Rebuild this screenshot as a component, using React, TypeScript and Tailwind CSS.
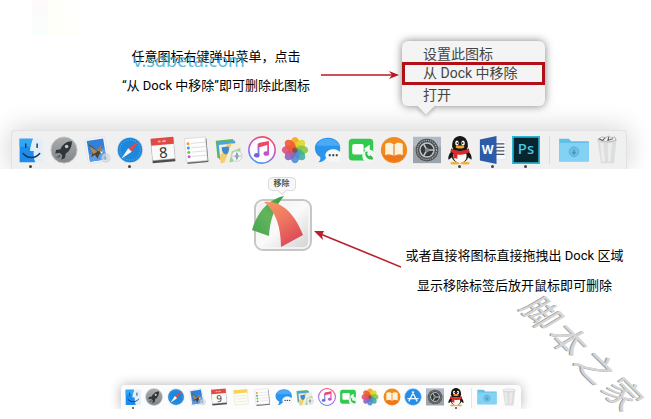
import type { ReactNode } from "react";

const SANS = "font-[Roboto,'Noto_Sans_CJK_SC',sans-serif]";

function Svg({ children }: { children: ReactNode }) {
  return (
    <svg viewBox="0 0 32 32" className="block w-full overflow-visible" aria-hidden="true">
      {children}
    </svg>
  );
}

const Finder = () => (
  <Svg>
    <path d="M3 3h27v27H3z" fill="#e4eef8" />
    <path d="M3 3h15c-2 5-3 9-3 14h4c0 5 0 9 2 13H3z" fill="#1e8cec" />
    <path d="M3 3h15c-1 3-2 5-2 9H3z" fill="#2fa8f3" />
    <path d="M10 9v4M23 9v4M7 20c5 6 14 6 19 0" stroke="#173654" strokeWidth="1.6" fill="none" strokeLinecap="round" />
  </Svg>
);

const Rocket = () => (
  <Svg>
    <defs>
      <linearGradient id="steel" x1="0" y1="0" x2="0" y2="1">
        <stop offset="0" stopColor="#a9adb0" />
        <stop offset="1" stopColor="#7f8588" />
      </linearGradient>
    </defs>
    <circle cx="16" cy="16" r="15" fill="url(#steel)" stroke="#c9cccd" />
    <path d="M25 6c-6 0-11 4-13 9l-5 1-1 4 5-1 3 3-1 5 4-2 1-5c5-3 7-8 7-14z" fill="#303538" />
    <circle cx="19" cy="12" r="2" fill="#c3c8ca" />
    <path d="M11 21l-4 4 5-1z" fill="#53595c" />
  </Svg>
);

const Mail = () => (
  <Svg>
    <g transform="rotate(-9 16 16)">
      <path d="M4 2h23v28H4z" fill="#f5f8fb" stroke="#d5dbe1" strokeWidth=".6" />
      <path d="M6 4h19v24H6z" fill="#3480d8" />
      <path d="M6 20l19-5v13H6z" fill="#5c9be0" />
      <path d="M7 8c3 2 6 5 8 8l5 1 3 3-5 1-3 5-2-5-5 2 3-6z" fill="#4c4137" />
      <path d="M8 10c3 2 6 5 8 8l-5 2z" fill="#a98a5c" />
      <path d="M15 17l7-6-2 7z" fill="#9c8058" />
      <path d="M19 18l4 1-3 2z" fill="#fff" />
    </g>
    <circle cx="26" cy="25" r="5.500" fill="#bfc8d0" opacity=".6" />
    <circle cx="26" cy="25" r="3.500" fill="none" stroke="#e8edf1" strokeWidth=".8" />
  </Svg>
);

const Safari = () => (
  <Svg>
    <circle cx="16" cy="16" r="15" fill="#d4dbe1" />
    <circle cx="16" cy="16" r="14" fill="#1d87dc" />
    <circle cx="16" cy="16" r="11.500" fill="none" stroke="#7dc1f2" strokeWidth="1" strokeDasharray="1 2" />
    <path d="M26 6L14 14l4 4z" fill="#ea4540" />
    <path d="M6 26l8-12 4 4z" fill="#f6f6f6" />
  </Svg>
);

const Calendar = ({ day }: { day: string }) => (
  <Svg>
    <g transform="rotate(-5 16 16)">
      <path d="M3 4h26v26H3z" fill="#4c4c4c" />
      <path d="M3 3h26v24H3z" fill="#fafafa" stroke="#c4c4c4" strokeWidth=".6" />
      <path d="M3 2h26v8H3z" fill="#e04a45" />
      <path d="M11 6h3M16 6h4" stroke="#f6b3af" strokeWidth="2" />
      <text x="16" y="25" textAnchor="middle" fontSize="17" fill="#333" fontFamily="Noto Sans, sans-serif">{day}</text>
    </g>
  </Svg>
);

const Notes = () => (
  <Svg>
    <g transform="rotate(-5 16 16)">
      <path d="M4 4h24v25H4z" fill="#fffdf5" stroke="#d5d3cb" strokeWidth=".7" />
      <path d="M4 3h24v6H4z" fill="#f6d257" />
      <path d="M6 14h20M6 19h20M6 24h20" stroke="#e4e1d6" />
    </g>
  </Svg>
);

const Reminders = () => (
  <Svg>
    <g transform="rotate(-5 16 16)">
      <path d="M5 4h24v27H5z" fill="#686868" />
      <path d="M4 2h24v27H4z" fill="#fdfdfd" stroke="#d0d0d0" strokeWidth=".7" />
      <path d="M11 8h16M11 13h16M11 18h16M11 23h16" stroke="#d9dcdf" />
      <circle cx="7.500" cy="8" r="1.700" fill="#f59a23" />
      <circle cx="7.500" cy="13" r="1.700" fill="#2b9fec" />
      <circle cx="7.500" cy="18" r="1.700" fill="#6cc832" />
      <circle cx="7.500" cy="23" r="1.700" fill="#c657dc" />
    </g>
  </Svg>
);

const Maps = () => (
  <Svg>
    <g transform="rotate(-6 16 16)">
      <path d="M2 4h20v20H2z" fill="#58b85a" />
      <path d="M4 6h20v20H4z" fill="#4ca2e7" />
      <path d="M5 9h24v21H5z" fill="#f2eddf" />
      <path d="M5 22l10-13h5L9 30H5z" fill="#f1cf6e" />
      <path d="M15 30l4-12 10-3v4l-7 3-3 8z" fill="#9bd493" />
      <path d="M8 12h8v4q-1 4-4 5-3-1-4-5z" fill="#3989d3" />
    </g>
    <circle cx="25" cy="23" r="6" fill="#f4f5f6" stroke="#c9ced2" />
    <path d="M25 18l2 5-2 5-2-5z" fill="#8199ad" />
    <path d="M20 23h10" stroke="#a8b3bc" />
  </Svg>
);

const Music = () => (
  <Svg>
    <defs>
      <linearGradient id="tune" x1=".7" y1="0" x2=".3" y2="1">
        <stop offset="0" stopColor="#fa4b63" />
        <stop offset=".55" stopColor="#b557dc" />
        <stop offset="1" stopColor="#3d9eee" />
      </linearGradient>
    </defs>
    <circle cx="16" cy="16" r="15" fill="#fcfbfd" stroke="url(#tune)" strokeWidth="1.800" />
    <path d="M12 22V10l11-3v12" fill="none" stroke="url(#tune)" strokeWidth="2" />
    <path d="M12 8l11-2v4l-11 3z" fill="#ee4664" />
    <ellipse cx="10" cy="22" rx="3.200" ry="2.600" fill="#795cdf" />
    <ellipse cx="21" cy="20" rx="3.200" ry="2.600" fill="#c452ca" />
  </Svg>
);

const petals = ["#f7a51c", "#dfd72b", "#86c440", "#3fae9a", "#4b8dd6", "#8b65bd", "#db4f7e", "#ee5a30"];

const Photos = () => (
  <Svg>
    <circle cx="16" cy="16" r="14" fill="#fff" opacity=".6" />
    {petals.map((fill, i) => (
      <ellipse key={fill} cx="16" cy="8.500" rx="5.200" ry="7.500" fill={fill} opacity=".9" transform={`rotate(${i * 45} 16 16)`} />
    ))}
    <circle cx="16" cy="16" r="3" fill="#6b4a3a" opacity=".7" />
  </Svg>
);

const Messages = () => (
  <Svg>
    <path d="M16 2c8 0 14 5 14 12s-6 12-14 12l-3 0c-2 3-5 4-8 4 2-2 3-4 2-6C3 22 1 18 1 14 1 7 8 2 16 2z" fill="#2b94ec" />
    <path d="M3 11C5 5 10 3 16 3s11 3 13 8z" fill="#58b4f7" opacity=".7" />
    <path d="M22 15c5 0 9 3 9 7 0 2-1 4-2 5l1 3-4-1c-8 2-13-2-13-7 0-4 4-7 9-7z" fill="#f6f7f8" />
    <circle cx="18" cy="22" r="1.300" fill="#3d4b57" />
    <circle cx="22" cy="22" r="1.300" fill="#3d4b57" />
    <circle cx="26" cy="22" r="1.300" fill="#3d4b57" />
  </Svg>
);

const FaceTime = () => (
  <Svg>
    <rect x="2" y="3" width="28" height="25" rx="4" fill="#31ca4e" />
    <rect x="6" y="9" width="13" height="12" rx="2" fill="#fff" />
    <path d="M20 14l6-4v10l-6-4z" fill="#fff" />
    <circle cx="25" cy="23" r="7.500" fill="#eef6f0" />
    <path d="M21 18c-1 6 3 9 8 9l1-2-3-3-2 1c-1-1-2-2-2-3l1-2z" fill="#31bd4c" />
  </Svg>
);

const Books = () => (
  <Svg>
    <circle cx="16" cy="16" r="15" fill="#f28b1d" />
    <path d="M3 22a15 15 0 0026 0z" fill="#e96c1a" opacity=".6" />
    <path d="M16 10c-3-3-7-3-10-1v13c3-2 7-1 10 1 3-2 7-3 10-1V9c-3-2-7-2-10 1z" fill="#fff2dd" />
    <path d="M16 10v13" stroke="#dd7b20" strokeWidth="1.300" />
  </Svg>
);

const AppStore = () => (
  <Svg>
    <circle cx="16" cy="16" r="15" fill="#238de9" stroke="#c2dcf1" />
    <path d="M17 7L9 23M15 7l8 16M7 19h18" stroke="#f4faff" strokeWidth="2.400" fill="none" strokeLinecap="round" />
  </Svg>
);

const Settings = () => (
  <Svg>
    <path d="M0 1h32v30H0z" fill="#9ca4ab" />
    <path d="M0 1h32v11H0z" fill="#b9c5d0" opacity=".7" />
    <circle cx="16" cy="16" r="13" fill="#4b4e50" />
    <circle cx="16" cy="16" r="11" fill="none" stroke="#a5a8aa" strokeWidth="1.500" strokeDasharray="1.500 1" />
    <circle cx="16" cy="16" r="8" fill="#34383a" stroke="#c3c5c6" strokeWidth="1.600" />
    <path d="M17 16h7M16 16l-4-7M16 16l-4 7" stroke="#c3c5c6" strokeWidth="1.800" />
    <circle cx="16" cy="16" r="2.500" fill="#858a8d" />
  </Svg>
);

const Penguin = () => (
  <Svg>
    <path d="M8 16C3 20 2 25 3 27l4-3zM24 16c5 4 6 9 5 11l-4-3z" fill="#171717" />
    <ellipse cx="16" cy="21" rx="10" ry="10" fill="#1a1a1a" />
    <ellipse cx="16" cy="23" rx="7.500" ry="8" fill="#fafafa" />
    <path d="M7 11c0-7 4-11 9-11s9 4 9 11c0 4-3 6-9 6s-9-2-9-6z" fill="#161616" />
    <ellipse cx="12.500" cy="8" rx="2" ry="3" fill="#fff" />
    <ellipse cx="19.500" cy="8" rx="2" ry="3" fill="#fff" />
    <circle cx="13" cy="8" r="1" fill="#111" />
    <circle cx="19" cy="8" r="1" fill="#111" />
    <ellipse cx="16" cy="12.500" rx="5" ry="1.700" fill="#f4a921" />
    <path d="M6 14c6 4 14 4 20 0l1 4c-4 3-9 4-14 3v5l-4-1v-5l-4-2z" fill="#db2929" />
    <ellipse cx="10" cy="31" rx="5" ry="1.500" fill="#efb13a" />
    <ellipse cx="22" cy="31" rx="5" ry="1.500" fill="#efb13a" />
  </Svg>
);

const Word = () => (
  <Svg>
    <path d="M16 5h15v22H16z" fill="#f7f8fa" stroke="#d9dce2" strokeWidth=".6" />
    <path d="M19 9h10M19 13h10M19 17h10M19 21h10" stroke="#4b5260" strokeWidth="1.500" />
    <path d="M1 4l19-4v32L1 28z" fill="#2c5ba9" />
    <text x="10" y="21" textAnchor="middle" fontSize="14" fontWeight="700" fill="#fff" fontFamily="Noto Sans, sans-serif">W</text>
  </Svg>
);

const Photoshop = () => (
  <Svg>
    <path d="M0 0h32v32H0z" fill="#29b7d2" />
    <path d="M2 2h28v28H2z" fill="#07252e" />
    <text x="16" y="21" textAnchor="middle" fontSize="17" fontWeight="500" fill="#43cce9" fontFamily="Noto Sans, sans-serif">Ps</text>
  </Svg>
);

const Folder = () => (
  <Svg>
    <path d="M-1 3h11l3 3h20v23H-1z" fill="#62bfe8" />
    <path d="M-1 8h34v21H-1z" fill="#83d2f4" />
    <circle cx="16" cy="18" r="5.500" fill="#6dbfe4" stroke="#56add5" />
    <path d="M16 15v5m-2-2l2 3 2-3" stroke="#4294bd" strokeWidth="1.200" fill="none" />
  </Svg>
);

const Trash = ({ full }: { full?: boolean }) => (
  <Svg>
    <path d="M5 4h22l-3 27H9z" fill="#dcdddd" />
    <path d="M8 8h4l2 21h-4zM17 8h5l-2 21h-3z" fill="#eaebeb" />
    <ellipse cx="16" cy="4" rx="11" ry="2.500" fill="#f1f1f1" stroke="#c7c8c8" strokeWidth=".8" />
    {full && (
      <>
        <path d="M6 4l4-3 4 1 4-2 3 2 4-1 1 4-9 2z" fill="#f4f4f4" stroke="#999" strokeWidth=".7" />
        <path d="M7 3l4 2 3-3M18 1l-1 4 6-2" fill="none" stroke="#555" strokeWidth="1.200" />
      </>
    )}
  </Svg>
);

type Item = { name: string; icon: ReactNode; open?: boolean };

const mainDock: Item[] = [
  { name: "Finder", icon: <Finder />, open: true },
  { name: "Launchpad", icon: <Rocket /> },
  { name: "Mail", icon: <Mail /> },
  { name: "Safari", icon: <Safari />, open: true },
  { name: "Calendar", icon: <Calendar day="8" /> },
  { name: "Reminders", icon: <Reminders /> },
  { name: "Maps", icon: <Maps /> },
  { name: "iTunes", icon: <Music /> },
  { name: "Photos", icon: <Photos /> },
  { name: "Messages", icon: <Messages /> },
  { name: "FaceTime", icon: <FaceTime /> },
  { name: "iBooks", icon: <Books /> },
  { name: "Settings", icon: <Settings /> },
  { name: "QQ", icon: <Penguin />, open: true },
  { name: "Word", icon: <Word />, open: true },
  { name: "Photoshop", icon: <Photoshop />, open: true },
];

const smallDock: Item[] = [
  { name: "Finder", icon: <Finder />, open: true },
  { name: "Launchpad", icon: <Rocket /> },
  { name: "Safari", icon: <Safari /> },
  { name: "Mail", icon: <Mail /> },
  { name: "Calendar", icon: <Calendar day="9" /> },
  { name: "Notes", icon: <Notes /> },
  { name: "Reminders", icon: <Reminders /> },
  { name: "Messages", icon: <Messages /> },
  { name: "Maps", icon: <Maps /> },
  { name: "iTunes", icon: <Music /> },
  { name: "FaceTime", icon: <FaceTime /> },
  { name: "Photos", icon: <Photos /> },
  { name: "iBooks", icon: <Books /> },
  { name: "App Store", icon: <AppStore /> },
  { name: "Settings", icon: <Settings /> },
  { name: "QQ", icon: <Penguin />, open: true },
];

function DockButton({ item, small }: { item: Item; small?: boolean }) {
  return (
    <button type="button" aria-label={item.name} className="flex flex-1 flex-col items-center">
      <span className={small ? "w-[18px]" : "w-7"}>{item.icon}</span>
      {item.open && (
        <span className={small ? "mt-px size-0.5 rounded-full bg-[#444]" : "mt-px size-[3px] rounded-full bg-[#444]"} />
      )}
    </button>
  );
}

export default function App() {
  return (
    <main className={`relative min-h-screen overflow-hidden bg-white text-black ${SANS}`}>
      <div className="absolute top-0 left-8 flex h-9 w-12 opacity-40">
        <span className="flex-1 bg-linear-to-b from-[#fff3f7] to-[#effffa]" />
        <span className="flex-1 bg-[#fffff4]" />
        <span className="flex-1 bg-linear-to-b from-white to-[#fffff4]" />
      </div>

      <section className="relative overflow-hidden">
        <div className="relative z-10 flex h-[130px] items-start justify-center pl-[9px]">
          <div className="relative mt-[42px] w-[202px] text-center text-[13px] leading-[29px] whitespace-nowrap">
            <p>任意图标右键弹出菜单，点击</p>
            <p>“从 Dock 中移除”即可删除此图标</p>
            <span className="absolute top-1 left-[18px] font-['Noto_Sans',sans-serif] text-[18px] leading-7 text-[#36a9d8] opacity-80">v.sdbeta.com</span>
          </div>
          <svg viewBox="0 0 78 12" className="mt-[69px] ml-1 w-[78px]" aria-hidden="true">
            <path d="M0 6h72" stroke="#bd1820" strokeWidth="1.500" />
            <path d="M78 6L68 2l3 4-3 4z" fill="#bd1820" />
          </svg>
          <div className="relative mt-[41px] ml-[3px] w-[143px] rounded-md bg-[#f4f4f4] pt-1 pb-0.5 text-[14px] leading-[19px] text-[#444] shadow-[0_0_9px_rgba(0,0,0,0.5)]">
            <span className="absolute -bottom-1.5 left-[18px] size-3 rotate-45 bg-[#f4f4f4] shadow-[2px_2px_4px_rgba(0,0,0,0.2)]" />
            <button type="button" className="relative block h-[17px] w-full pl-[21px] text-left">设置此图标</button>
            <button type="button" className="relative flex h-[23px] w-full items-center border-3 border-[#b01016] pl-[18px] text-left">从 Dock 中移除</button>
            <button type="button" className="relative block h-[19px] w-full pl-[21px] text-left leading-4">打开</button>
          </div>
        </div>
        <div className="flex justify-center pr-[13px]">
          <nav aria-label="Dock" className="flex h-[39px] w-[616px] items-start rounded-t-sm border border-b-0 border-[#e2e2e2] bg-[#f0f0f0] pt-[5px] pr-[3px] pl-0.5 shadow-[0_0_28px_rgba(0,0,0,0.2)]">
            <div className="flex flex-1">
              {mainDock.map((item) => <DockButton key={item.name} item={item} />)}
            </div>
            <span className="mx-[7px] h-7 w-px bg-[#dcdcdc]" />
            <div className="flex w-[66px]">
              <DockButton item={{ name: "Downloads", icon: <Folder /> }} />
              <DockButton item={{ name: "Trash", icon: <Trash full /> }} />
            </div>
          </nav>
        </div>
      </section>

      <section className="relative overflow-hidden">
        <div className="flex h-[216px] items-start justify-center pl-[222px]">
          <div className="flex w-[66px] flex-col items-center pt-2">
            <span className="relative h-[14px] w-7 rounded-sm border border-[#ddd] bg-[#f7f7f7] text-center text-[8px] leading-3 font-bold text-[#555]">
              移除
              <span className="absolute -bottom-1 left-2.5 size-1.5 rotate-45 border-r border-b border-[#ddd] bg-[#f7f7f7]" />
            </span>
            <svg viewBox="0 0 66 58" className="mt-[3px] w-[66px]" role="img" aria-label="FastStone">
              <defs>
                <linearGradient id="tile" x1="0" y1="0" x2="1" y2="1">
                  <stop offset="0" stopColor="#eeeeef" />
                  <stop offset=".5" stopColor="#fafafa" />
                  <stop offset="1" stopColor="#cfcfd1" />
                </linearGradient>
                <linearGradient id="leaf" x1="1" y1="0" x2="0" y2="1">
                  <stop offset="0" stopColor="#329e43" />
                  <stop offset=".5" stopColor="#63b55d" />
                  <stop offset="1" stopColor="#45a34d" />
                </linearGradient>
                <linearGradient id="flame" x1="0" y1="0" x2=".6" y2="1">
                  <stop offset="0" stopColor="#f49a62" />
                  <stop offset=".5" stopColor="#ef7760" />
                  <stop offset="1" stopColor="#dc4a57" />
                </linearGradient>
              </defs>
              <rect x="6" y="6" width="56" height="50" rx="8" fill="url(#tile)" stroke="#c6c6c7" strokeWidth="2" />
              <rect x="8" y="8" width="52" height="46" rx="6" fill="none" stroke="#f8f8f8" strokeWidth="1.500" />
              <path d="M35 2C20 5 8 18 3 36l17 6C21 26 25 14 35 2z" fill="url(#leaf)" />
              <path d="M15 8C30 6 45 17 54 41L32 53C32 34 27 17 15 8z" fill="url(#flame)" />
            </svg>
          </div>
          <svg viewBox="0 0 90 44" className="mt-[58px] -ml-1 w-[90px]" aria-hidden="true">
            <path d="M7 6l83 34" stroke="#b9202c" strokeWidth="1.600" />
            <path d="M3 4l10 0-2 4 1 5z" fill="#b9202c" />
          </svg>
          <div className="mt-[72px] ml-1 w-[220px] text-center text-[13px] leading-[30px] whitespace-nowrap">
            <p>或者直接将图标直接拖拽出 Dock 区域</p>
            <p>显示移除标签后放开鼠标即可删除</p>
          </div>
        </div>
        <div className="flex justify-center pr-[9px]">
          <nav aria-label="Small Dock" className="flex h-6 w-[400px] items-start rounded-t-sm bg-[#fcfcfc] pt-[3px] pr-px pl-px shadow-[0_0_12px_rgba(0,0,0,0.3)]">
            <div className="flex flex-1">
              {smallDock.map((item) => <DockButton key={item.name} item={item} small />)}
            </div>
            <span className="mx-1 h-5 w-px bg-[#e6e6e6]" />
            <div className="flex w-11">
              <DockButton small item={{ name: "Downloads", icon: <Folder /> }} />
              <DockButton small item={{ name: "Trash", icon: <Trash /> }} />
            </div>
          </nav>
        </div>
      </section>

      <div className="absolute top-[332px] left-[506px] flex rotate-45 gap-1 text-[34px] leading-10 text-[#d5d5d5] italic [text-shadow:-1px_1px_0_#999]">
        <span>脚</span>
        <span>本</span>
        <span>之</span>
        <span>家</span>
      </div>
    </main>
  );
}
